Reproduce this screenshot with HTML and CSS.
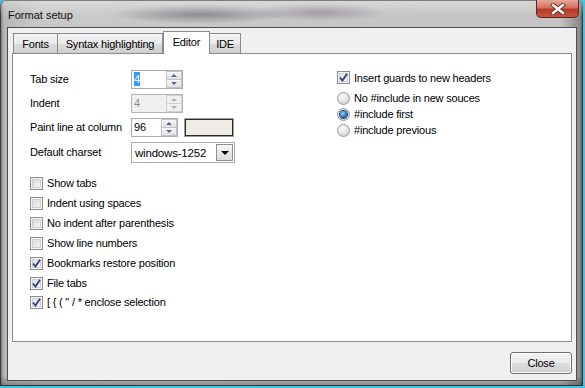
FILE: index.html
```html
<!DOCTYPE html>
<html>
<head>
<meta charset="utf-8">
<link rel="stylesheet" href="styles.css">
</head>
<body>
<div class="window">
  <div class="titlebar">
    <span class="title">Format setup</span>
    <div class="close-x">
      <svg width="16" height="12" viewBox="0 0 16 12">
        <path d="M3 2 L13 10 M13 2 L3 10" stroke="#6b2a22" stroke-width="4.2" stroke-linecap="square"/>
        <path d="M3 2 L13 10 M13 2 L3 10" stroke="#ffffff" stroke-width="2.4" stroke-linecap="square"/>
      </svg>
    </div>
  </div>
  <div class="frame">
    <div class="client">
      <div class="tabs">
        <div class="tab t-fonts">Fonts</div>
        <div class="tab t-syntax">Syntax highlighting</div>
        <div class="tab active t-editor">Editor</div>
        <div class="tab t-ide">IDE</div>
      </div>
      <div class="panel">
        <div class="col-left">
          <div class="form-grid">
            <span class="lbl">Tab size</span>
            <div class="spin">
              <span class="val"><span class="sel">4</span></span>
              <span class="spin-btns"><span class="sbtn"><i class="arr up"></i></span><span class="sbtn"><i class="arr down"></i></span></span>
            </div>
            <span class="lbl">Indent</span>
            <div class="spin disabled">
              <span class="val">4</span>
              <span class="spin-btns"><span class="sbtn"><i class="arr up"></i></span><span class="sbtn"><i class="arr down"></i></span></span>
            </div>
            <span class="lbl">Paint line at column</span>
            <div class="row-pair">
              <div class="spin narrow">
                <span class="val">96</span>
                <span class="spin-btns"><span class="sbtn"><i class="arr up"></i></span><span class="sbtn"><i class="arr down"></i></span></span>
              </div>
              <div class="color-box"></div>
            </div>
            <span class="lbl">Default charset</span>
            <div class="combo">
              <span class="val">windows-1252</span>
              <span class="drop"><i class="tri"></i></span>
            </div>
          </div>
          <div class="checks">
            <div class="chk-row"><span class="chk"></span><span>Show tabs</span></div>
            <div class="chk-row"><span class="chk"></span><span>Indent using spaces</span></div>
            <div class="chk-row"><span class="chk"></span><span>No indent after parenthesis</span></div>
            <div class="chk-row"><span class="chk"></span><span>Show line numbers</span></div>
            <div class="chk-row"><span class="chk checked"><svg viewBox="0 0 9 9" width="9" height="9"><path d="M1 4.5 L3.5 7.5 L8 0.8" fill="none" stroke="#2a3d80" stroke-width="1.8"/></svg></span><span>Bookmarks restore position</span></div>
            <div class="chk-row"><span class="chk checked"><svg viewBox="0 0 9 9" width="9" height="9"><path d="M1 4.5 L3.5 7.5 L8 0.8" fill="none" stroke="#2a3d80" stroke-width="1.8"/></svg></span><span>File tabs</span></div>
            <div class="chk-row last"><span class="chk checked"><svg viewBox="0 0 9 9" width="9" height="9"><path d="M1 4.5 L3.5 7.5 L8 0.8" fill="none" stroke="#2a3d80" stroke-width="1.8"/></svg></span><span>[ { ( " / * enclose selection</span></div>
          </div>
        </div>
        <div class="col-right">
          <div class="chk-row guards"><span class="chk checked"><svg viewBox="0 0 9 9" width="9" height="9"><path d="M1 4.5 L3.5 7.5 L8 0.8" fill="none" stroke="#2a3d80" stroke-width="1.8"/></svg></span><span>Insert guards to new headers</span></div>
          <div class="radios">
            <div class="radio-row"><span class="radio"></span><span>No #include in new souces</span></div>
            <div class="radio-row"><span class="radio on"></span><span>#include first</span></div>
            <div class="radio-row"><span class="radio"></span><span>#include previous</span></div>
          </div>
        </div>
      </div>
      <div class="footer">
        <button class="btn">Close</button>
      </div>
    </div>
  </div>
</div>
</body>
</html>
```
FILE: styles.css
```css
html, body {
  margin: 0;
  padding: 0;
  background: #3fc4ee;
}
body {
  width: 585px;
  height: 388px;
  overflow: hidden;
  font-family: "Liberation Sans", Arial, sans-serif;
  font-size: 11px;
  letter-spacing: -0.2px;
  color: #000;
}
.window {
  width: 583px;
  height: 386px;
  display: flex;
  flex-direction: column;
  border-radius: 6px 6px 0 0;
  background:
    radial-gradient(ellipse 90px 10px at 200px 14px, rgba(60,60,70,0.45), rgba(60,60,70,0) 100%),
    radial-gradient(ellipse 70px 9px at 320px 12px, rgba(70,60,80,0.35), rgba(70,60,80,0) 100%),
    linear-gradient(to right, #5a5a5a 0px, #9a9a9a 2px, #b8b8b8 4px, #c9c9c9 40px, #c4c4c4 560px, #8a8a8a 580px, #444 583px);
  box-shadow: inset 0 0 0 1px #3a3a3a;
  overflow: hidden;
}
.titlebar {
  height: 27px;
  display: flex;
  align-items: flex-start;
  padding-left: 8px;
  flex-shrink: 0;
  background: linear-gradient(to bottom, rgba(255,255,255,0.35), rgba(255,255,255,0) 60%);
}
.title {
  margin-top: 9px;
  font-size: 11px;
  letter-spacing: 0;
  color: #111;
}
.close-x {
  margin-left: auto;
  margin-right: 4px;
  width: 41px;
  height: 17px;
  border: 1px solid #5e2620;
  border-top: none;
  border-radius: 0 0 5px 5px;
  background: linear-gradient(to bottom, #e8a89c 0%, #d4705f 45%, #b83a28 55%, #c8543f 100%);
  display: flex;
  align-items: center;
  justify-content: center;
}
.frame {
  flex: 1;
  display: flex;
  padding: 0 6px 5px 7px;
  background: linear-gradient(to bottom, rgba(0,0,0,0) 0%, rgba(0,0,0,0) 97%, rgba(40,40,40,0.4) 100%);
}
.client {
  flex: 1;
  display: flex;
  flex-direction: column;
  background: #f0f0f0;
  border: 1px solid #4e4e4e;
  padding: 3px 4px 6px 4px;
}
.tabs {
  display: flex;
  align-items: flex-end;
  height: 22px;
  position: relative;
  z-index: 2;
}
.tab {
  box-sizing: border-box;
  height: 20px;
  border: 1px solid #898c95;
  border-bottom: none;
  background: linear-gradient(to bottom, #f3f3f3 0%, #ebebeb 50%, #dddddd 51%, #cfcfcf 100%);
  display: flex;
  align-items: center;
  justify-content: center;
  padding-top: 1px;
}
.t-fonts { width: 45px; margin-left: 1px; }
.t-syntax { width: 106px; margin-left: -1px; }
.t-editor { width: 47px; }
.t-ide { width: 32px; margin-left: -1px; }
.tab.active {
  height: 23px;
  margin-bottom: -1px;
  background: #fff;
  padding-top: 0;
  padding-bottom: 3px;
}
.panel {
  flex: 1;
  background: #fff;
  border: 1px solid #898c95;
  display: flex;
  padding: 16px 0 0 17px;
}
.col-left {
  width: 307px;
}
.form-grid {
  display: grid;
  grid-template-columns: 101px auto;
  grid-template-rows: 19px 19px 19px 21px;
  row-gap: 5px;
  align-items: center;
}
.lbl { line-height: 19px; }
.spin {
  box-sizing: border-box;
  width: 52px;
  height: 19px;
  border: 1px solid #abadb3;
  background: #fff;
  display: flex;
}
.spin.narrow { width: 47px; }
.spin .val {
  flex: 1;
  padding-left: 2px;
  line-height: 17px;
}
.sel {
  background: #3399ff;
  color: #fff;
  padding: 1px 0;
}
.spin.disabled {
  background: #f0f0f0;
  border-color: #b5b5b5;
}
.spin.disabled .val { color: #8d8d8d; }
.spin-btns {
  width: 16px;
  display: flex;
  flex-direction: column;
}
.sbtn {
  flex: 1;
  box-sizing: border-box;
  border: 1px solid #c3c3c3;
  background: linear-gradient(to bottom, #f7f7f7, #e2e2e2);
  display: flex;
  align-items: center;
  justify-content: center;
}
.sbtn + .sbtn { border-top: none; }
.arr {
  width: 0;
  height: 0;
  border-left: 3px solid transparent;
  border-right: 3px solid transparent;
}
.arr.up { border-bottom: 3px solid #4a6a9e; }
.arr.down { border-top: 3px solid #4a6a9e; }
.disabled .sbtn { background: #f0f0f0; border-color: #d0d0d0; }
.disabled .arr.up { border-bottom-color: #b0b0b0; }
.disabled .arr.down { border-top-color: #b0b0b0; }
.row-pair {
  display: flex;
  gap: 6px;
  align-items: center;
}
.color-box {
  box-sizing: border-box;
  width: 50px;
  height: 19px;
  border: 1px solid #a0a0a0;
  box-shadow: inset 0 0 0 1px #2b2b2b;
  background: #efebe7;
}
.combo {
  box-sizing: border-box;
  width: 104px;
  height: 21px;
  border: 1px solid #abadb3;
  background: #fff;
  display: flex;
  align-items: center;
  padding: 1px;
}
.combo .val {
  flex: 1;
  padding-left: 2px;
  font-size: 11.5px;
  letter-spacing: -0.2px;
}
.drop {
  box-sizing: border-box;
  width: 17px;
  height: 17px;
  border: 1px solid #8e8f8f;
  background: linear-gradient(to bottom, #f5f5f5, #dcdcdc);
  display: flex;
  align-items: center;
  justify-content: center;
}
.tri {
  width: 0;
  height: 0;
  border-left: 4px solid transparent;
  border-right: 4px solid transparent;
  border-top: 4px solid #000;
  margin-top: 1px;
}
.checks {
  margin-top: 10px;
  display: flex;
  flex-direction: column;
}
.chk-row {
  height: 20px;
  display: flex;
  align-items: center;
}
.chk-row.last { margin-top: -1px; }
.chk {
  box-sizing: border-box;
  width: 13px;
  height: 13px;
  border: 1px solid #8e8f8f;
  background: linear-gradient(135deg, #d6d6d6, #f8f8f8);
  box-shadow: inset 0 0 0 1px #f4f4f4, inset 0 0 0 2px #d0d0d0;
  margin-right: 4px;
  display: flex;
  align-items: center;
  justify-content: center;
  flex-shrink: 0;
}
.chk.checked {
  background: linear-gradient(135deg, #dfe3ec, #f8f8f8);
}
.chk-row.guards {
  height: 15px;
}
.radios {
  margin-top: 5px;
}
.radio-row {
  height: 16px;
  display: flex;
  align-items: center;
}
.radio {
  box-sizing: border-box;
  width: 13px;
  height: 13px;
  border-radius: 50%;
  border: 1px solid #9a9a9a;
  background: radial-gradient(circle at 40% 35%, #ffffff, #d8d8d8 70%);
  margin-right: 4px;
  flex-shrink: 0;
  display: flex;
  align-items: center;
  justify-content: center;
}
.radio.on::after {
  content: "";
  width: 7px;
  height: 7px;
  border-radius: 50%;
  background: radial-gradient(circle at 40% 35%, #8fd8ff, #1a6fb8 60%, #0c3f78 100%);
  box-shadow: 0 0 0 1px #233a5e;
}
.footer {
  display: flex;
  justify-content: flex-end;
  margin-top: 10px;
}
.btn {
  box-sizing: border-box;
  width: 62px;
  height: 22px;
  border: 1px solid #707070;
  border-radius: 3px;
  background: linear-gradient(to bottom, #f2f2f2 0%, #ebebeb 50%, #dddddd 51%, #cfcfcf 100%);
  box-shadow: inset 0 0 0 1px #fcfcfc;
  font-family: "Liberation Sans", Arial, sans-serif;
  font-size: 11px;
  letter-spacing: -0.2px;
  color: #000;
  padding: 0;
}
```
